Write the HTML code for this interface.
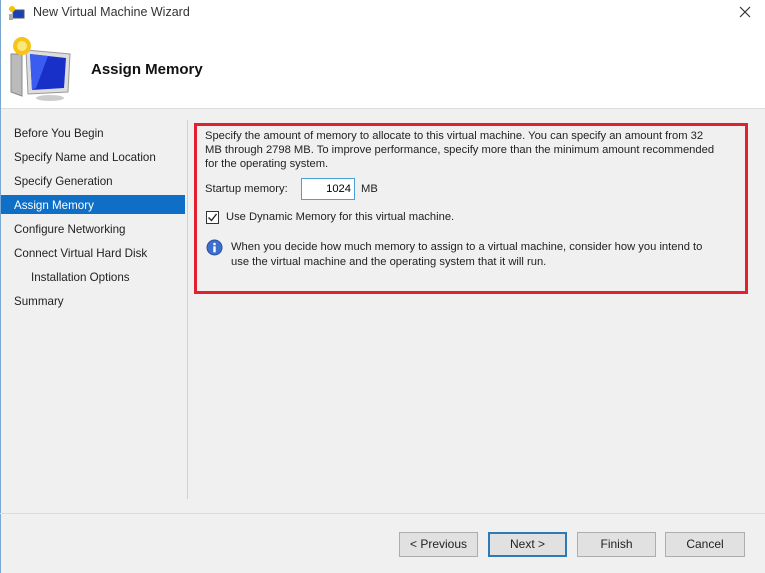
<!DOCTYPE html>
<html><head><meta charset="utf-8"><style>
*{margin:0;padding:0;box-sizing:border-box}
body{width:765px;height:573px;overflow:hidden;background:#f0f0f0;font-family:"Liberation Sans",sans-serif;font-size:12px;color:#000;position:relative}
.a{position:absolute;white-space:nowrap}
.hdr{position:absolute;left:0;top:0;width:765px;height:109px;background:#fff;border-bottom:1px solid #dcdcdc}
.nav{position:absolute;left:14px;font-size:11.6px;color:#222}
.btn{position:absolute;top:532px;height:25px;background:#e1e1e1;border:1px solid #adadad;text-align:center;line-height:23px;font-size:12px;color:#222}
.t{font-size:11.2px;color:#222}
</style></head><body>
<div class="hdr"></div>
<div class="a" style="left:0;top:0;width:1px;height:573px;background:#7aa7d0"></div>
<svg class="a" style="left:8px;top:5px" width="18" height="16"><rect x="5" y="5" width="11" height="8" fill="#1b3fb8" stroke="#555" stroke-width="1"/><rect x="1" y="9" width="4" height="6" fill="#aaa"/><circle cx="4" cy="4" r="3" fill="#f5c400"/></svg>
<div class="a" style="left:33px;top:5px;font-size:12.5px;color:#333">New Virtual Machine Wizard</div>
<svg class="a" style="left:739px;top:6px" width="12" height="12"><path d="M1 1L11 11M11 1L1 11" stroke="#333" stroke-width="1.2"/></svg>
<svg class="a" style="left:8px;top:32px" width="65" height="70">
<polygon points="3,22 14,22 14,64 3,60" fill="#bbb" stroke="#888"/>
<polygon points="18,18 62,22 60,60 20,62" fill="#ddd" stroke="#999"/>
<polygon points="22,22 58,26 56,56 24,58" fill="#1830c8"/>
<polygon points="22,22 40,24 28,56 24,58" fill="#3a5cf0"/>
<ellipse cx="42" cy="66" rx="14" ry="3" fill="#ccc"/>
<circle cx="14" cy="14" r="9" fill="#f6c417"/>
<circle cx="14" cy="14" r="5" fill="#fde77a"/>
</svg>
<div class="a" style="left:91px;top:61px;font-size:15px;font-weight:bold;color:#111">Assign Memory</div>
<div class="a" style="left:187px;top:120px;width:1px;height:379px;background:#d0d0d0"></div>
<div class="a" style="left:1px;top:195px;width:184px;height:19px;background:#0f6fc6"></div>
<div class="nav" style="top:127px">Before You Begin</div>
<div class="nav" style="top:151px">Specify Name and Location</div>
<div class="nav" style="top:175px">Specify Generation</div>
<div class="nav" style="top:199px;color:#fff">Assign Memory</div>
<div class="nav" style="top:223px">Configure Networking</div>
<div class="nav" style="top:247px">Connect Virtual Hard Disk</div>
<div class="nav" style="top:271px;left:31px">Installation Options</div>
<div class="nav" style="top:295px">Summary</div>
<div class="a" style="left:194px;top:123px;width:554px;height:171px;border:3px solid #e3202d"></div>
<div class="a t" style="left:205px;top:129px;line-height:14px">Specify the amount of memory to allocate to this virtual machine. You can specify an amount from 32<br>MB through 2798 MB. To improve performance, specify more than the minimum amount recommended<br>for the operating system.</div>
<div class="a t" style="left:205px;top:183px">Startup memory:</div>
<div class="a" style="left:301px;top:178px;width:54px;height:22px;border:1px solid #4aa0d8;background:#fff;text-align:right;padding-right:3px;line-height:20px;font-size:11.2px">1024</div>
<div class="a t" style="left:361px;top:183px">MB</div>
<div class="a" style="left:206px;top:211px;width:13px;height:13px;border:1px solid #333;background:#fff"></div>
<svg class="a" style="left:206px;top:211px" width="13" height="13"><path d="M2.5 6.5 L5.5 9.5 L10.5 3" stroke="#222" stroke-width="1.4" fill="none"/></svg>
<div class="a t" style="left:226px;top:211px">Use Dynamic Memory for this virtual machine.</div>
<svg class="a" style="left:206px;top:239px" width="17" height="17"><circle cx="8.5" cy="8.5" r="7.5" fill="#3d6fcf" stroke="#2a4f9c"/><circle cx="8.5" cy="5" r="1.3" fill="#fff"/><rect x="7.3" y="7.3" width="2.4" height="6" fill="#fff"/></svg>
<div class="a t" style="left:231px;top:240px;line-height:15px">When you decide how much memory to assign to a virtual machine, consider how you intend to<br>use the virtual machine and the operating system that it will run.</div>
<div class="a" style="left:0;top:513px;width:765px;height:1px;background:#dcdcdc"></div>
<div class="btn" style="left:399px;width:79px">&lt; Previous</div>
<div class="btn" style="left:488px;width:79px;border:2px solid #2d7ab8;line-height:21px">Next &gt;</div>
<div class="btn" style="left:577px;width:79px">Finish</div>
<div class="btn" style="left:665px;width:80px">Cancel</div>
</body></html>
